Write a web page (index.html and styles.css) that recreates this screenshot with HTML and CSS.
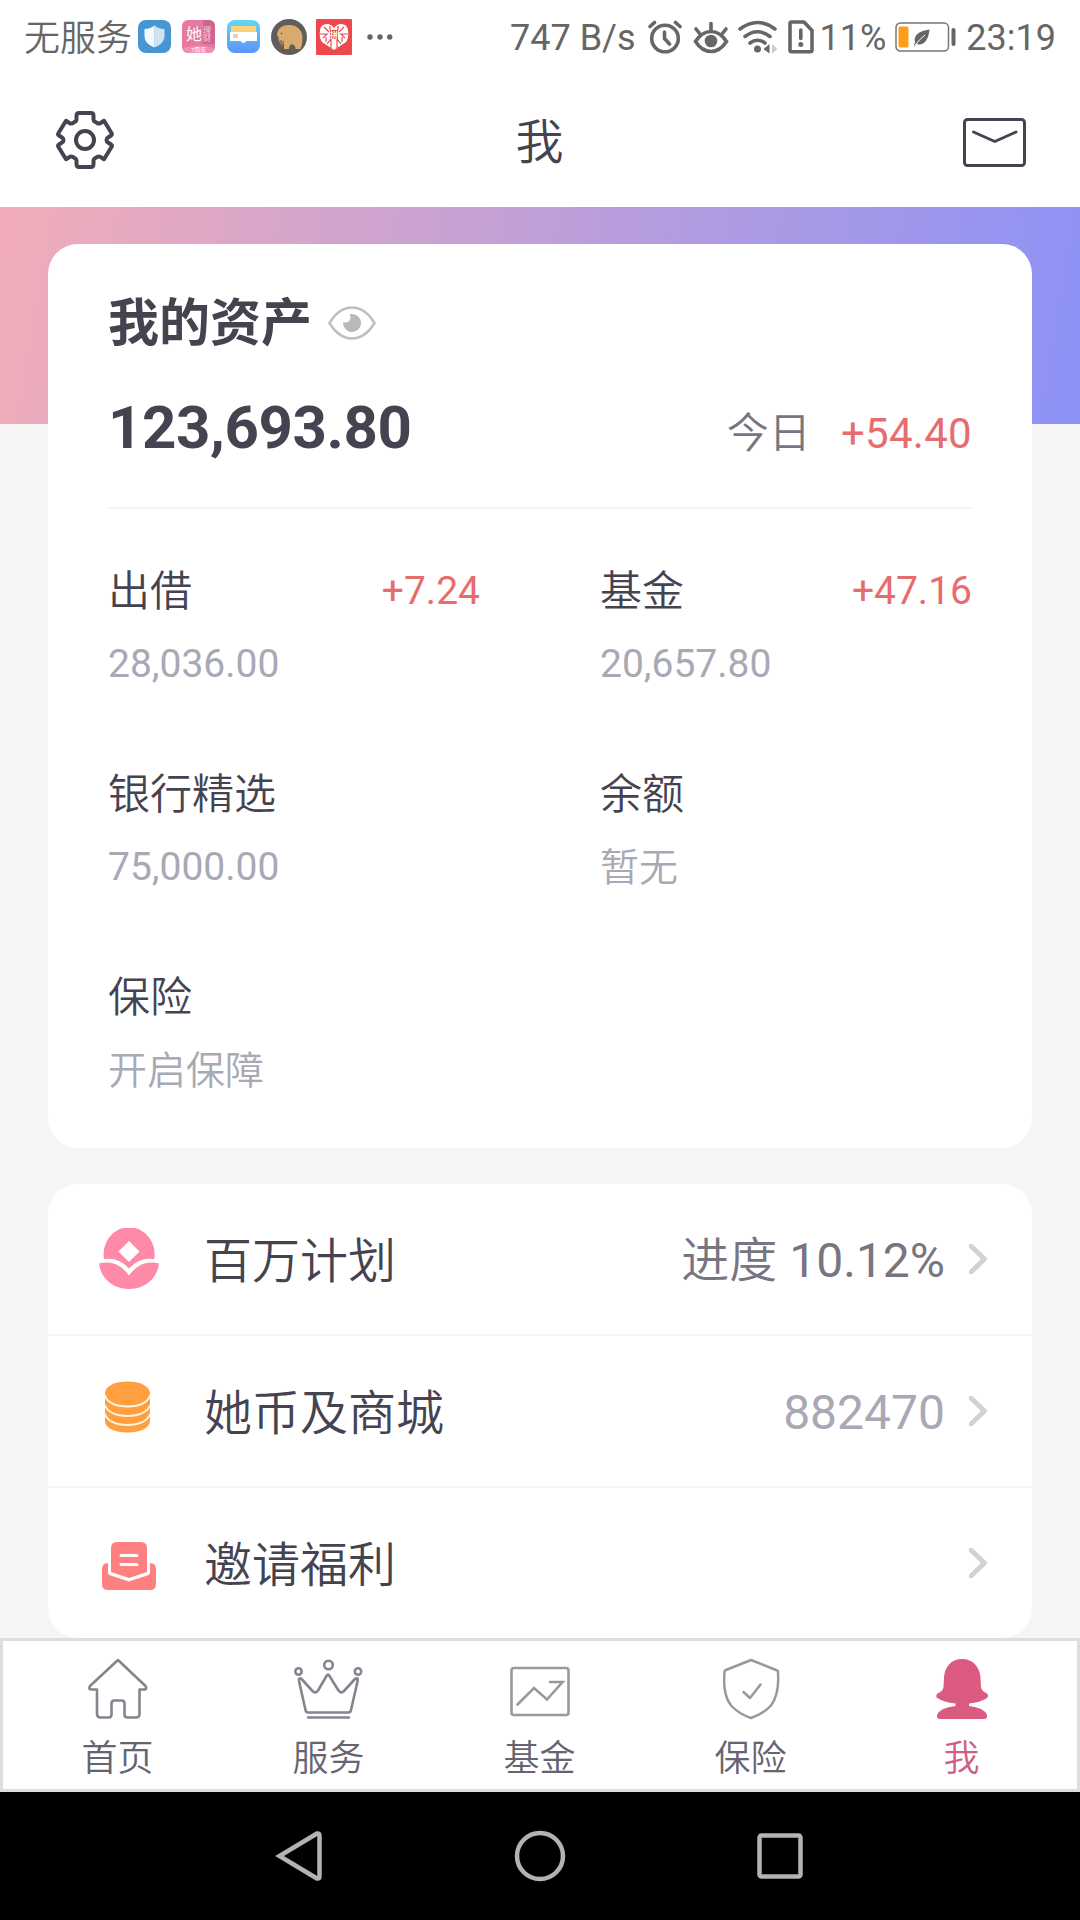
FILE: index.html
```html
<!DOCTYPE html>
<html lang="zh-CN">
<head>
  <meta charset="UTF-8">
  <meta name="viewport" content="width=device-width, initial-scale=1.0">
  <title>我</title>
  <link rel="stylesheet" href="styles.css">
</head>
<body>
  <div class="statusbar">
    <div class="status-left">
      <span class="carrier">无服务</span>
      <svg class="app" width="33" height="33" viewBox="0 0 33 33">
        <rect width="33" height="33" rx="8" fill="#4795d1"/>
        <path d="M16.500 5.500c3 2.500 6.500 3.500 10 3.500v7c0 5.500-4 9-10 11.500z" fill="#cfe2f0"/>
        <path d="M16.500 5.500c-3 2.500-6.500 3.500-10 3.500v7c0 5.500 4 9 10 11.500z" fill="#f4f9fc"/>
      </svg>
      <svg class="app" width="33" height="33" viewBox="0 0 33 33">
        <rect width="33" height="33" rx="6" fill="#e5799f"/>
        <path d="M21 0h6a6 6 0 0 1 6 6v18H21z" fill="#cf6690"/>
        <path d="M1 28q15-5 31 0-1 5-6 5H7q-5 0-6-5z" fill="#f08db0"/>
        <text x="4" y="20" font-size="16" fill="#fff">她</text>
        <text x="21" y="13" font-size="8" fill="#f6d3df">理</text>
        <text x="21" y="21" font-size="8" fill="#f6d3df">财</text>
        <text x="9" y="31.500" font-size="6" fill="#fff">7周年</text>
      </svg>
      <svg class="app" width="33" height="33" viewBox="0 0 33 33">
        <defs><linearGradient id="wallet" x1="0" y1="0" x2="0" y2="1"><stop offset="0" stop-color="#67d5f2"/><stop offset="1" stop-color="#5b94fa"/></linearGradient></defs>
        <rect width="33" height="33" rx="8" fill="url(#wallet)"/>
        <rect x="4" y="6" width="25" height="8" fill="#fbd27a"/>
        <path d="M3 12h27v9H19.500q-3 4-6 0H3z" fill="#fff"/>
        <rect x="6" y="14" width="5" height="4" rx="1" fill="#f3c9ad"/>
      </svg>
      <svg class="app" width="36" height="36" viewBox="0 0 36 36">
        <circle cx="18" cy="18" r="18" fill="#5f5e5c"/>
        <path d="M6 17C6 10 10 6 18 6c9 0 13.500 6 13.500 13 0 4-.5 8-2 11h-5q0-4-3.500-5-3 1-3 5h-5v-5q-1 0-1.500 1v2q-3-3-4.500-11z" fill="#d8aa6b"/>
        <path d="M10 21v6M12 22v6" stroke="#6b5132" stroke-width="1" fill="none"/>
        <circle cx="10.500" cy="14.500" r=".8" fill="#5a442b"/>
      </svg>
      <svg class="app" width="36" height="36" viewBox="0 0 36 36">
        <rect width="36" height="36" rx="1" fill="#ee474d"/>
        <path d="M18 31L6 23Q3 19 4 11q1-6 7-6 4 0 7 4 3-4 7-4 6 0 7 6 1 8-2 12z" fill="#fff"/>
        <path d="M8 8l5 5M4 15h7l-4 4M28 8l-5 5M32 15h-7l4 4M11 25l4-5v9M25 25l-4-5v9M14 7v4M22 7v4M10 18v5M26 18v5" stroke="#ee474d" stroke-width="1.200" fill="none"/>
        <rect x="14" y="11" width="8" height="9" fill="#ee474d"/>
        <text x="14" y="18.500" font-size="8" font-weight="700" fill="#fff">拼</text>
      </svg>
      <svg class="more" width="26" height="36" viewBox="0 0 26 36" fill="#666">
        <circle cx="3" cy="18" r="2.700"/><circle cx="13" cy="18" r="2.700"/><circle cx="22.700" cy="18" r="2.700"/>
      </svg>
    </div>
    <div class="status-right">
      <span class="speed">747 B/s</span>
      <svg class="ic-alarm" width="34" height="36" viewBox="0 0 34 36" fill="none" stroke="#666" stroke-width="3.600" stroke-linecap="round">
        <circle cx="17" cy="19.500" r="13.300"/><path d="M16.500 13v6.500l5 5.500M2 7.500L6.500 3.500M27.500 3.500L32 7.500"/>
      </svg>
      <svg class="ic-eye" width="36" height="36" viewBox="0 0 36 36" fill="none" stroke="#666" stroke-width="3.600" stroke-linecap="round">
        <path d="M2.500 22.500Q9 12.500 18 12.500t15.500 10Q27 32.500 18 32.500T2.500 22.500zM18 4.500v7M3 10l4 5M33 10l-4 5"/>
        <circle cx="18" cy="22" r="6.300" fill="#666" stroke="none"/>
      </svg>
      <svg class="ic-wifi" width="40" height="36" viewBox="0 0 40 36" fill="none" stroke="#666" stroke-width="3.600" stroke-linecap="round">
        <path d="M2 10Q19.500-3 37 10M7 17.500Q19.500 8 32 17.500M12 24q7.500-5.500 15 0"/>
        <circle cx="19.500" cy="30" r="3.500" fill="#666" stroke="none"/>
        <path d="M31.500 25v9.500L25.500 30z" fill="#666" stroke="none"/><path d="M34 25v9.500L39.500 30z" fill="#ccc" stroke="none"/>
      </svg>
      <svg class="ic-sim" width="26" height="34" viewBox="0 0 26 34" fill="none" stroke="#666" stroke-width="3.600" stroke-linejoin="round">
        <path d="M2 3.500Q2 2 3.500 2H16l8 8.500V30q0 1.800-1.800 1.800H3.800Q2 31.800 2 30z"/>
        <path d="M12.800 10v8.500" stroke-linecap="round"/><circle cx="12.800" cy="24.500" r="2.500" fill="#666" stroke="none"/>
      </svg>
      <span class="percent">11%</span>
      <svg class="ic-battery" width="61" height="30" viewBox="0 0 61 30">
        <rect x="1" y="1" width="52.500" height="28" rx="4.500" fill="none" stroke="#777" stroke-width="1.500"/>
        <rect x="3.500" y="4.500" width="10" height="21" rx="1.500" fill="#fb9e1c"/>
        <path d="M34.500 7.500Q33 22 24 22.500q-1.500 0-2.500-1Q20 23 19.500 24.500 18.500 24 20 20.500 17.500 10 34.500 7.500z" fill="#666"/>
        <path d="M20 23.500q4-6 10-10.500" stroke="#fff" stroke-width="1" fill="none"/>
        <rect x="56.500" y="6" width="4" height="18" rx="2" fill="#666"/>
      </svg>
      <span class="clock">23:19</span>
    </div>
  </div>

  <div class="header">
    <svg width="58" height="58" viewBox="0 0 58 58" fill="none" stroke="#454350" stroke-width="4" stroke-linejoin="round">
      <path d="M20.500 5Q20.500 2 23 2H35Q37.500 2 37.500 5V8.500Q37.500 10 39 10.800L41.500 12.200Q43 13 44.500 12L48 9.800L55.500 22Q56.500 23.500 55 24.500L52 26.500Q50.500 27.300 50.500 29T52 31.500L55 33.500Q56.500 34.500 55.500 36L48 48.200L44.500 46Q43 45 41.500 45.800L39 47.200Q37.500 48 37.500 49.500V53Q37.500 56 35 56H23Q20.500 56 20.500 53V49.500Q20.500 48 19 47.200L16.500 45.800Q15 45 13.500 46L10 48.200L2.500 36Q1.500 34.500 3 33.500L6 31.500Q7.500 30.700 7.500 29T6 26.500L3 24.500Q1.500 23.500 2.500 22L10 9.800L13.500 12Q15 13 16.500 12.200L19 10.800Q20.500 10 20.500 8.500Z"/>
      <circle cx="29" cy="29" r="9"/>
    </svg>
    <h1>我</h1>
    <svg class="mail" width="63" height="49" viewBox="0 0 63 49" fill="none" stroke="#454350" stroke-width="3" stroke-linejoin="round" stroke-linecap="round">
      <rect x="1.500" y="1.500" width="60" height="46" rx="3"/><path d="M10.500 14L31.800 23.500 53 14"/>
    </svg>
  </div>

  <div class="content">
    <div class="banner"></div>
    <div class="card assets">
      <div class="assets-title">
        <h2>我的资产</h2>
        <svg width="48" height="34" viewBox="0 0 48 34">
          <path d="M1.500 17Q11 1.500 24 1.500T46.500 17Q37 32.500 24 32.500T1.500 17z" fill="none" stroke="#c0c0c0" stroke-width="2.600"/>
          <path d="M24 8a9 9 0 1 1-8.800 7.500 4.500 4.500 0 0 0 7-2Q23 10.500 21.500 8.300 22.500 8 24 8z" fill="#b9b9b9"/>
        </svg>
      </div>
      <div class="total">
        <span class="amount">123,693.80</span>
        <span class="today">今日</span>
        <span class="up">+54.40</span>
      </div>
      <div class="grid">
        <div class="item">
          <div class="item-top"><span>出借</span><span class="up">+7.24</span></div>
          <div class="item-value">28,036.00</div>
        </div>
        <div class="item">
          <div class="item-top"><span>基金</span><span class="up">+47.16</span></div>
          <div class="item-value">20,657.80</div>
        </div>
        <div class="item">
          <div class="item-top"><span>银行精选</span></div>
          <div class="item-value">75,000.00</div>
        </div>
        <div class="item">
          <div class="item-top"><span>余额</span></div>
          <div class="item-value hint">暂无</div>
        </div>
        <div class="item">
          <div class="item-top"><span>保险</span></div>
          <div class="item-value hint">开启保障</div>
        </div>
      </div>
    </div>

    <div class="card menu">
      <div class="row">
        <svg class="row-icon" width="60" height="62" viewBox="0 0 60 62">
          <path d="M5 31A25.500 27 0 1 1 55.200 31Q40 29 30 40.500 20 29 5 31z" fill="#ff8aa8"/>
          <path d="M30 13l10.500 10.500L30 34 19.500 23.500z" fill="#fff"/>
          <path d="M0 35.500Q18 31 30 47.500 42 31 60 35.500 58 51 44 58 38 61 30 61T16 58Q2 51 0 35.500z" fill="#ff8aa8"/>
        </svg>
        <span class="row-label">百万计划</span>
        <span class="row-value dark"><span class="cn">进度</span> 10.12%</span>
        <svg class="arrow" width="18" height="30" viewBox="0 0 18 30"><path d="M2 2l13.500 13L2 28"/></svg>
      </div>
      <div class="row">
        <svg class="row-icon" width="60" height="62" viewBox="0 0 60 62">
          <path d="M6 13.500C6 6 16 1.500 28.500 1.500S51 6 51 13.500V41C51 48 41 52.500 28.500 52.500S6 48 6 41z" fill="#ff9f40"/>
          <path d="M6 15C7 22 16 26.500 28.500 26.500S50 22 51 15M6 25C8 32 17 36 28.500 36S49 32 51 25M6 34C8 41 17 45 28.500 45S49 41 51 34" fill="none" stroke="#fff3df" stroke-width="1.800"/>
        </svg>
        <span class="row-label">她币及商城</span>
        <span class="row-value">882470</span>
        <svg class="arrow" width="18" height="30" viewBox="0 0 18 30"><path d="M2 2l13.500 13L2 28"/></svg>
      </div>
      <div class="row">
        <svg class="row-icon" width="60" height="62" viewBox="0 0 60 62">
          <path d="M3 37Q3 31 9 31V40.500q0 2 2 2.700L30 49.500 49 43.200q2-.7 2-2.700V31q6 0 6 6V52q0 6-6 6H9q-6 0-6-6z" fill="#ff8080"/>
          <path d="M12 16q0-6 6-6H42q6 0 6 6V40L30 46 12 40z" fill="#ff8080"/>
          <path d="M22 23.500H38M22 32.500H38" stroke="#fff" stroke-width="3" stroke-linecap="round"/>
        </svg>
        <span class="row-label">邀请福利</span>
        <svg class="arrow" width="18" height="30" viewBox="0 0 18 30"><path d="M2 2l13.500 13L2 28"/></svg>
      </div>
    </div>
  </div>

  <div class="tabbar">
    <div class="tab">
      <svg width="70" height="62" viewBox="0 0 70 62" fill="none" stroke="#85848f" stroke-width="2.600" stroke-linejoin="round">
        <path d="M35 2L62.500 28Q64.500 31.500 61 31.500H56.500V56Q56.500 59.500 53 59.500H44.500Q41.500 59.500 41.500 56.500V45.500Q41.500 42.500 38.500 42.500H31.500Q28.500 42.500 28.500 45.500V56.500Q28.500 59.500 25.500 59.500H17.500Q14 59.500 14 56V31.500H8.500Q5 31.500 7 28Z"/>
      </svg>
      <span>首页</span>
    </div>
    <div class="tab">
      <svg width="70" height="62" viewBox="1 0 70 62" fill="none" stroke="#85848f" stroke-width="2.600" stroke-linejoin="round" stroke-linecap="round">
        <path d="M6.500 20.500Q8 20 9 21.500L19.500 33Q22.500 36 25 32.500L33.500 18Q35 15 36.500 18L45.500 32.500Q48 36 51 33L61.500 21.500Q62.500 20 64.500 20.500Q65 22 64.500 23.500L58 52Q57.500 54.500 55.500 54.500H15Q13 54.500 12.500 52L6 23Q5.500 21.500 6.500 20.500zM15 59.500H56"/>
        <circle cx="35.500" cy="7" r="4.300"/><circle cx="5.500" cy="13.500" r="3.200"/><circle cx="65" cy="13.500" r="3.200"/>
      </svg>
      <span>服务</span>
    </div>
    <div class="tab">
      <svg width="70" height="62" viewBox="0 0 70 62" fill="none" stroke="#999" stroke-width="2.600" stroke-linecap="round">
        <rect x="6.500" y="10" width="57" height="47" rx="2.500"/><path d="M12.500 46.500L29 30 42 41.500 57.500 24H45"/>
      </svg>
      <span>基金</span>
    </div>
    <div class="tab">
      <svg width="70" height="62" viewBox="0 0 70 62" fill="none" stroke="#999" stroke-width="2.500" stroke-linecap="round" stroke-linejoin="round">
        <path d="M35 2L60 12Q62.500 12.500 62 15Q63.500 36 55 47.500 47 56 35 60 23 56 15 47.500 6.500 36 8.500 15 8 12.500 10 12z"/><path d="M27.500 34L34 40 44.500 26.500"/>
      </svg>
      <span>保险</span>
    </div>
    <div class="tab active">
      <svg width="70" height="62" viewBox="0 0 70 62" fill="#db5a80">
        <path d="M35 1C46 1 53 9 53.500 20L54 29Q54.500 33 60 35.500 62 37.500 60 40 53 44.500 42 45.500V48Q57 49.500 60 57 60.500 61 57 61H13Q9.500 61 10 57 13 49.500 28.500 48V45.500Q17 44.500 9.500 39.500 8.500 37 10.500 35.500 16 33 16.500 29L17 20C17.500 9 24 1 35 1z"/>
      </svg>
      <span>我</span>
    </div>
  </div>

  <div class="navbar">
    <svg width="52" height="52" viewBox="0 0 52 52"><path d="M43 3.500L5.500 26 43 48.500Q45.500 49 45.500 46.500V5.500Q45.500 3 43 3.500z"/></svg>
    <svg width="52" height="52" viewBox="0 0 52 52"><circle cx="26" cy="26" r="23"/></svg>
    <svg width="52" height="52" viewBox="0 0 52 52"><rect x="5.500" y="5.500" width="41" height="41" rx="2"/></svg>
  </div>
</body>
</html>
```

FILE: styles.css
```css
* { box-sizing: border-box; }
body { margin: 0; width: 1080px; height: 1920px; overflow: hidden; display: flex; flex-direction: column; background: #f5f5f5; color: #454350; font-family: Roboto, "Noto Sans CJK SC", sans-serif; font-weight: 400; }
svg { display: block; flex: none; }
h1, h2 { margin: 0; }

.statusbar { height: 72px; flex: none; background: #fff; display: flex; justify-content: space-between; align-items: center; padding: 1px 24px 0 24px; font-size: 36px; line-height: 48px; color: #666; }
.status-left, .status-right { display: flex; align-items: center; }
.carrier { width: 108px; margin-right: 6px; padding-top: 4px; font-weight: 350; }
.speed, .percent, .clock { padding-top: 3px; }
.app { margin-right: 11px; }
.app:nth-of-type(2) { margin-right: 12px; }
.app:nth-of-type(4) { margin-right: 9px; }
.more { margin-left: 4px; }
.ic-alarm { margin-left: 12px; }
.ic-eye { margin-left: 11px; }
.ic-wifi { margin-left: 9px; }
.ic-sim { margin-left: 10px; }
.percent { margin-left: 6px; }
.ic-battery { margin-left: 9px; }
.clock { margin-left: 10px; }

.header { height: 135px; flex: none; background: #fff; display: flex; justify-content: space-between; align-items: center; padding: 0 54px 0 56px; }
.header h1 { font-size: 48px; font-weight: 350; line-height: 60px; padding: 6px 0 0 2px; }
.mail { margin-top: 5px; }

.content { flex: 1; min-height: 0; padding: 0 48px; overflow: hidden; }
.banner { height: 217px; margin: 0 -48px -180px; background: linear-gradient(100deg, #f2adb9 0%, #be9fd9 50%, #8c92f6 100%); }
.card { position: relative; background: #fff; border-radius: 30px; }

.assets { height: 904px; padding: 48px 60px 0; }
.assets-title { display: flex; align-items: center; height: 62px; }
.assets-title h2 { font-size: 51px; line-height: 60px; font-weight: 700; margin-right: 16px; padding-top: 2px; }
.total { display: flex; align-items: baseline; height: 155px; padding-top: 39px; border-bottom: 2px solid #f5f5f5; font-size: 42px; }
.amount { font-size: 60px; line-height: 70px; font-weight: 700; letter-spacing: -.4px; margin-right: auto; }
.today { color: #777582; margin-right: 30px; font-weight: 350; }
.up { color: #e66d6d; }
.total .up { letter-spacing: .3px; }
.grid { display: grid; grid-template-columns: 372px 372px; column-gap: 120px; grid-auto-rows: 203px; padding-top: 51px; }
.item-top { display: flex; justify-content: space-between; height: 60px; font-size: 42px; line-height: 63px; font-weight: 350; }
.item-top .up { font-size: 39px; line-height: 62px; font-weight: 400; }
.item-value { margin-top: 14px; font-size: 39px; line-height: 60px; color: #a9a8b5; }
.hint { font-weight: 350; line-height: 62px; }

.menu { margin-top: 36px; height: 454px; }
.row { display: flex; align-items: center; height: 152px; padding: 0 45px 0 51px; border-bottom: 2px solid #f5f5f5; font-size: 48px; line-height: 60px; }
.row:last-child { height: 150px; border-bottom: none; }
.row-label { margin-left: 45px; padding-top: 5px; font-weight: 350; }
.row-value { margin-left: auto; padding-top: 3px; color: #a9a8b5; }
.row-value.dark { color: #777582; }
.cn { font-weight: 350; }
.arrow { margin-left: auto; fill: none; stroke: #d1d1d6; stroke-width: 5; stroke-linecap: round; }
.row-value + .arrow { margin-left: 24px; }

.tabbar { height: 154px; flex: none; display: flex; background: #fff; border: 3px solid #ddd; padding: 17px 9px 0; }
.tab { width: 211px; display: flex; flex-direction: column; align-items: center; font-size: 36px; line-height: 48px; font-weight: 350; color: #666470; }
.tab span { margin-top: 15px; }
.tab.active { color: #d05f86; }

.navbar { height: 128px; flex: none; background: #000; display: flex; justify-content: center; align-items: center; gap: 188px; }
.navbar svg { fill: none; stroke: #b3b3b3; stroke-width: 4.500; }
```
